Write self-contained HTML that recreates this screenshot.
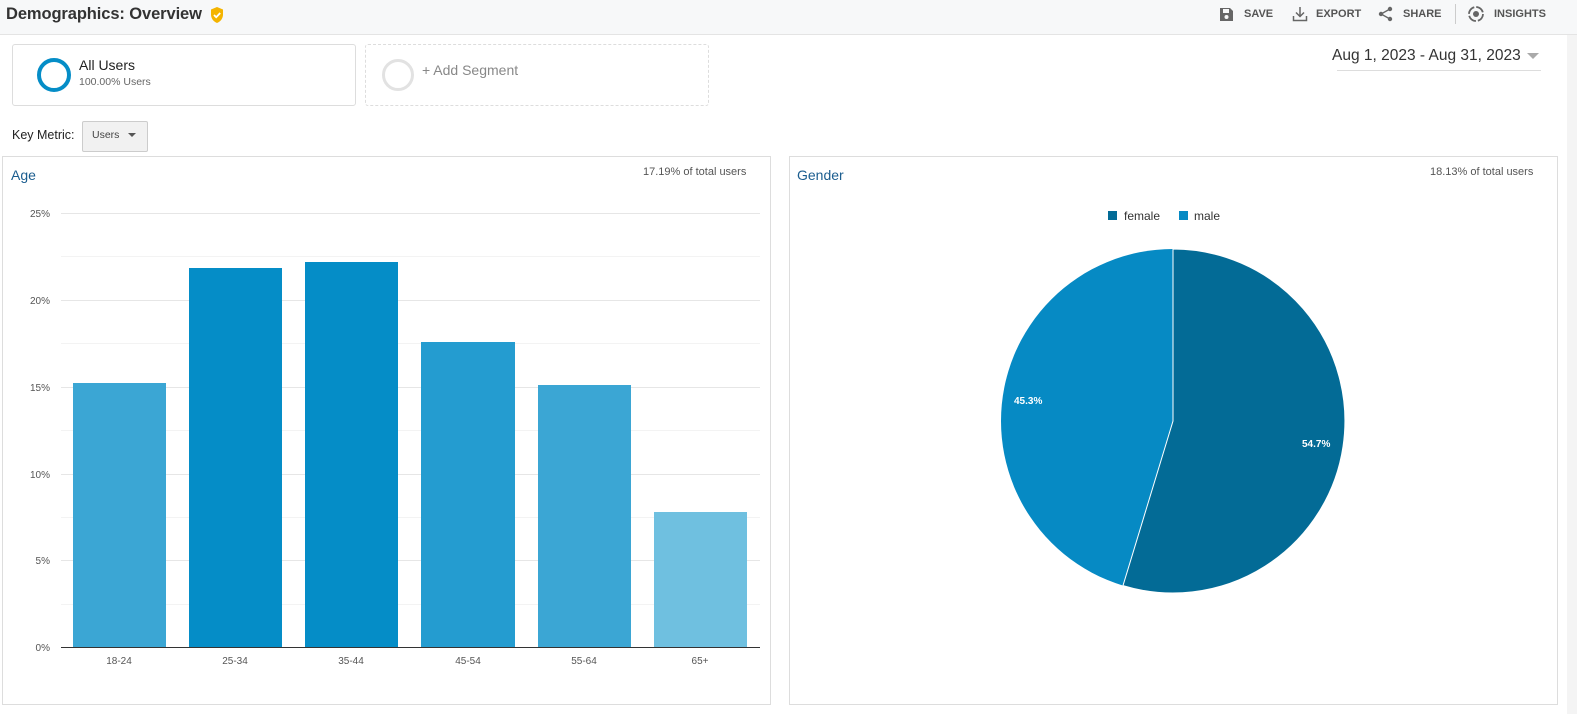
<!DOCTYPE html>
<html><head><meta charset="utf-8"><style>
body{margin:0;width:1577px;height:714px;background:#fff;font-family:"Liberation Sans",Arial,sans-serif;position:relative;overflow:hidden;color:#333}
.abs{position:absolute}
.hdr{left:0;top:0;width:1577px;height:34px;background:#f7f8f9;border-bottom:1px solid #e4e4e4}
.strip{left:1567px;top:35px;width:10px;height:679px;background:#f4f4f4}
.tb{font-size:11px;font-weight:bold;color:#555;top:8px}
.seg{border:1px solid #ddd;border-radius:3px;height:60px;top:44px}
.panel{border:1px solid #ddd;top:156px;height:547px}
</style></head><body>
<div class="abs hdr"></div>
<div class="abs strip"></div>
<div class="abs" style="left:6px;top:5px;font-size:16.5px;font-weight:bold;color:#333;letter-spacing:-0.1px">Demographics: Overview</div>
<svg class="abs" style="left:209px;top:6px" width="16" height="18" viewBox="0 0 16 18"><path d="M8 1L14 3.5V8.5C14 12.5 11.5 15.5 8 17C4.5 15.5 2 12.5 2 8.5V3.5Z" fill="#f4b400"/><path d="M5 9L7.2 11.2L11.2 7" stroke="#fff" stroke-width="1.8" fill="none"/></svg>
<svg class="abs" style="left:1219px;top:7px" width="15" height="15" viewBox="0 0 15 15"><path d="M1 1H11L14 4V14H1Z" fill="#666"/><rect x="4" y="2" width="6" height="4" fill="#f7f8f9"/><circle cx="7.5" cy="10" r="2" fill="#f7f8f9"/></svg>
<div class="abs tb" style="left:1244px">SAVE</div>
<svg class="abs" style="left:1292px;top:6px" width="16" height="16" viewBox="0 0 16 16"><path d="M8 1V10M4 6.5L8 10.5L12 6.5M1.5 10V14.5H14.5V10" stroke="#666" stroke-width="1.5" fill="none"/></svg>
<div class="abs tb" style="left:1316px">EXPORT</div>
<svg class="abs" style="left:1378px;top:6px" width="16" height="16" viewBox="0 0 16 16"><circle cx="12" cy="3" r="2.2" fill="#666"/><circle cx="3" cy="8" r="2.2" fill="#666"/><circle cx="12" cy="13" r="2.2" fill="#666"/><path d="M12 3L3 8L12 13" stroke="#666" stroke-width="1.3" fill="none"/></svg>
<div class="abs tb" style="left:1403px">SHARE</div>
<div class="abs" style="left:1455px;top:4px;width:1px;height:20px;background:#ccc"></div>
<svg class="abs" style="left:1467px;top:5px" width="18" height="18" viewBox="0 0 18 18"><circle cx="9" cy="9" r="7" stroke="#666" stroke-width="1.8" fill="none" stroke-dasharray="9 2"/><circle cx="9" cy="9" r="3" fill="#666"/></svg>
<div class="abs tb" style="left:1494px">INSIGHTS</div>

<div class="abs seg" style="left:12px;width:342px"></div>
<div class="abs" style="left:37px;top:58px;width:26px;height:26px;border:4px solid #058dc7;border-radius:50%"></div>
<div class="abs" style="left:79px;top:57px;font-size:14px;color:#222">All Users</div>
<div class="abs" style="left:79px;top:76px;font-size:10.5px;color:#666">100.00% Users</div>
<div class="abs seg" style="left:365px;width:342px;border:1px dashed #ddd"></div>
<div class="abs" style="left:382px;top:59px;width:26px;height:26px;border:3px solid #e2e2e2;border-radius:50%"></div>
<div class="abs" style="left:422px;top:62px;font-size:14px;color:#888">+ Add Segment</div>
<div class="abs" style="left:1332px;top:47px;font-size:15.5px;color:#333">Aug 1, 2023 - Aug 31, 2023</div>
<svg class="abs" style="left:1527px;top:52px" width="12" height="8"><path d="M0 1H12L6 7Z" fill="#aaa"/></svg>
<div class="abs" style="left:1337px;top:70px;width:204px;height:1px;background:#ddd"></div>

<div class="abs" style="left:12px;top:128px;font-size:12.5px;color:#222">Key Metric:</div>
<div class="abs" style="left:82px;top:121px;width:64px;height:29px;border:1px solid #ccc;border-radius:2px;background:#f1f1f1"></div>
<div class="abs" style="left:92px;top:129px;font-size:10.5px;color:#444">Users</div>
<svg class="abs" style="left:128px;top:133px" width="8" height="5"><path d="M0 0H8L4 4Z" fill="#555"/></svg>

<div class="abs panel" style="left:2px;width:767px"></div>
<div class="abs" style="left:11px;top:167px;font-size:14px;color:#1b5d8f">Age</div>
<div class="abs" style="left:643px;top:166px;font-size:11px;color:#555">17.19% of total users</div>
<svg class="abs" style="left:0;top:0" width="770" height="714" font-family="Liberation Sans,Arial,sans-serif" font-size="10" fill="#555">
<g stroke-width="1">
<line x1="61" x2="760" y1="213.5" y2="213.5" stroke="#e6e6e6"/><line x1="61" x2="760" y1="256.5" y2="256.5" stroke="#f3f3f3"/>
<line x1="61" x2="760" y1="300.5" y2="300.5" stroke="#e6e6e6"/><line x1="61" x2="760" y1="343.5" y2="343.5" stroke="#f3f3f3"/>
<line x1="61" x2="760" y1="387.5" y2="387.5" stroke="#e6e6e6"/><line x1="61" x2="760" y1="430.5" y2="430.5" stroke="#f3f3f3"/>
<line x1="61" x2="760" y1="474.5" y2="474.5" stroke="#e6e6e6"/><line x1="61" x2="760" y1="517.5" y2="517.5" stroke="#f3f3f3"/>
<line x1="61" x2="760" y1="560.5" y2="560.5" stroke="#e6e6e6"/><line x1="61" x2="760" y1="604.5" y2="604.5" stroke="#f3f3f3"/>
</g>
<rect x="73" y="383" width="93" height="264" fill="#3ba6d4"/>
<rect x="189" y="268" width="93" height="379" fill="#058dc7"/>
<rect x="305" y="262" width="93" height="385" fill="#058dc7"/>
<rect x="421" y="342" width="94" height="305" fill="#249cd0"/>
<rect x="538" y="385" width="93" height="262" fill="#3ba6d4"/>
<rect x="654" y="512" width="93" height="135" fill="#6fc0e0"/>
<line x1="61" x2="760" y1="647.5" y2="647.5" stroke="#333"/>
<g text-anchor="end"><text x="50" y="217">25%</text><text x="50" y="304">20%</text><text x="50" y="391">15%</text><text x="50" y="478">10%</text><text x="50" y="564">5%</text><text x="50" y="651">0%</text></g>
<g text-anchor="middle"><text x="119" y="664">18-24</text><text x="235" y="664">25-34</text><text x="351" y="664">35-44</text><text x="468" y="664">45-54</text><text x="584" y="664">55-64</text><text x="700" y="664">65+</text></g>
</svg>

<div class="abs panel" style="left:789px;width:767px"></div>
<div class="abs" style="left:797px;top:167px;font-size:14px;color:#1b5d8f">Gender</div>
<div class="abs" style="left:1430px;top:166px;font-size:11px;color:#555">18.13% of total users</div>
<svg class="abs" style="left:0;top:0" width="1577" height="714" font-family="Liberation Sans,Arial,sans-serif">
<rect x="1108" y="211" width="9" height="9" fill="#036b96"/><text x="1124" y="220" font-size="12" fill="#333">female</text>
<rect x="1179" y="211" width="9" height="9" fill="#068ac4"/><text x="1194" y="220" font-size="12" fill="#333">male</text>
<circle cx="1173" cy="421" r="172" fill="#068ac4"/>
<path d="M1173 421V249A172 172 0 1 1 1123 585.6Z" fill="#036b96" stroke="#fff" stroke-width="1"/>
<text x="1302" y="447" font-size="10" font-weight="bold" fill="#fff">54.7%</text>
<text x="1014" y="404" font-size="10" font-weight="bold" fill="#fff">45.3%</text>
</svg>
</body></html>
